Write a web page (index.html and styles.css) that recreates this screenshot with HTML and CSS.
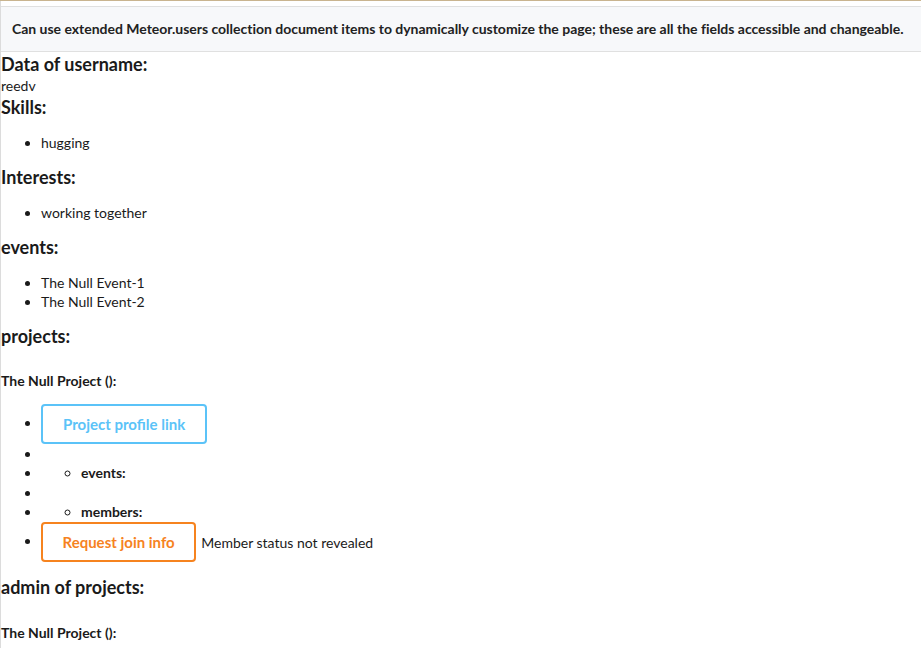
FILE: index.html
```html
<!DOCTYPE html>
<html>
<head>
<meta charset="utf-8">
<link rel="stylesheet" href="styles.css">
</head>
<body>
<div class="page">
  <div class="notice">Can use extended Meteor.users collection document items to dynamically customize the page; these are all the fields accessible and changeable.</div>
  <h3 class="title">Data of username:</h3>
  <div class="value">reedv</div>
  <h3>Skills:</h3>
  <ul><li>hugging</li></ul>
  <h3>Interests:</h3>
  <ul><li>working together</li></ul>
  <h3>events:</h3>
  <ul><li>The Null Event-1</li><li>The Null Event-2</li></ul>
  <h3>projects:</h3>
  <h4>The Null Project ():</h4>
  <ul class="proj">
    <li><button class="btn btn-blue">Project profile link</button></li>
    <li></li>
    <li><ul><li class="sub">events:</li></ul></li>
    <li></li>
    <li><ul><li class="sub">members:</li></ul></li>
    <li><button class="btn btn-orange">Request join info</button><span class="status">Member status not revealed</span></li>
  </ul>
  <h3>admin of projects:</h3>
  <h4 class="last">The Null Project ():</h4>
</div>
</body>
</html>
```
FILE: styles.css
```css
html, body {
  margin: 0;
  padding: 0;
  background: #fff;
}
body {
  border-top: 1px solid #c9b48f;
  font-family: Lato, "Open Sans", sans-serif;
  color: #1a1a1a;
  font-size: 14px;
  line-height: 19px;
  overflow: hidden;
}
.page {
  border-left: 1px solid #dcdcdc;
  min-height: 700px;
  padding-top: 5px;
}
.notice {
  background: #f7f8fa;
  border-top: 1px solid #e0e0e0;
  border-bottom: 1px solid #e0e0e0;
  padding: 12px 11px;
  font-size: 14px;
  font-weight: 700;
  line-height: 20px;
  letter-spacing: -0.015px;
  color: #222;
  white-space: nowrap;
}
h3 {
  font-size: 18px;
  line-height: 23px;
  font-weight: 700;
  margin: 0;
  color: #1a1a1a;
}
.title {
  margin-top: 1px;
}
h4 {
  font-size: 14px;
  line-height: 19px;
  font-weight: 700;
  margin: 23px 0 0;
}
h4.last {
  margin-top: 24px;
}
.value {
  line-height: 20px;
}
ul {
  margin: 14px 0;
  padding-left: 40px;
}
ul ul {
  margin: 0;
}
.proj {
  margin-top: 14px;
}
li {
  line-height: 19px;
}
.sub {
  font-weight: 700;
  list-style: circle;
  line-height: 20px;
}
.btn {
  font-family: Lato, "Open Sans", sans-serif;
  font-size: 15px;
  font-weight: 700;
  background: #fff;
  border: 2px solid;
  border-radius: 4px;
  height: 40px;
  padding: 0 20px;
  vertical-align: middle;
  cursor: pointer;
}
.btn-blue {
  color: #5bc3f8;
  border-color: #5bc3f8;
}
.btn-orange {
  color: #f6831f;
  border-color: #f6831f;
  padding: 0 19.5px;
}
.status {
  margin-left: 5px;
  vertical-align: middle;
}
```
